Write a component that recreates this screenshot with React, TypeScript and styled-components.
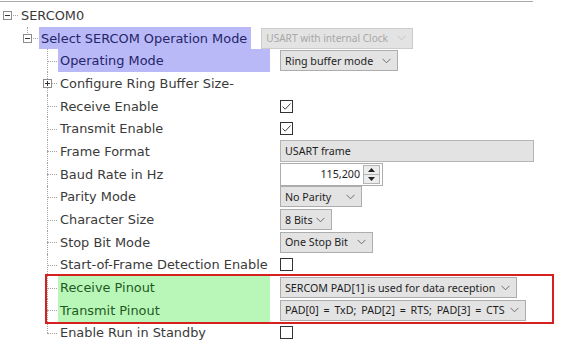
import React from "react";
import styled, { createGlobalStyle, css } from "styled-components";

const GlobalStyle = createGlobalStyle`
  html, body {
    margin: 0;
    padding: 0;
    background: #ffffff;
  }
  body {
    font-family: "DejaVu Sans", Verdana, sans-serif;
    color: #333333;
  }
`;

const ROW_H = 22.7;
const LINE = "#a3a3a3";

const Page = styled.div`
  width: 564px;
  height: 345px;
  overflow: hidden;
  padding-top: 1px;
  box-sizing: border-box;
`;

const TopRule = styled.div`
  width: 533px;
  height: 1px;
  background: #a9a9a9;
  margin-bottom: 2px;
`;

const Row = styled.div`
  display: flex;
  align-items: center;
  height: ${ROW_H}px;
`;

// tree gutter: connector lines + optional expander box
const Gutter = styled.div<{ $w: number; $x: number; $vline: "none" | "top" | "half" | "full" }>`
  position: relative;
  flex: none;
  align-self: stretch;
  width: ${(p) => p.$w}px;

  &::before {
    content: "";
    position: absolute;
    left: ${(p) => p.$x}px;
    top: 0;
    border-left: 1px dotted ${LINE};
    ${(p) =>
      p.$vline === "none"
        ? css`display: none;`
        : p.$vline === "full"
        ? css`bottom: 0;`
        : p.$vline === "half"
        ? css`bottom: 50%;`
        : css`height: 6px;`}
  }

  &::after {
    content: "";
    position: absolute;
    left: ${(p) => p.$x}px;
    right: 1px;
    top: 50%;
    border-top: 1px dotted ${LINE};
  }
`;

const Expander = styled.span<{ $x: number; $open?: boolean }>`
  position: absolute;
  z-index: 1;
  left: ${(p) => p.$x - 4}px;
  top: 50%;
  width: 9px;
  height: 9px;
  margin-top: -4px;
  box-sizing: border-box;
  border: 1px solid #8c8c8c;
  background: #ffffff;

  &::before {
    content: "";
    position: absolute;
    left: 1px;
    right: 1px;
    top: 3px;
    height: 1px;
    background: #333;
  }

  ${(p) =>
    p.$open
      ? ""
      : css`
          &::after {
            content: "";
            position: absolute;
            top: 1px;
            bottom: 1px;
            left: 3px;
            width: 1px;
            background: #333;
          }
        `}
`;

const tones = {
  plain: css`
    background: transparent;
    color: #3a3a3a;
  `,
  blue: css`
    background: #b9b9f7;
    color: #25256a;
  `,
  green: css`
    background: #b9f7b9;
    color: #1e5a1e;
  `,
};

const Label = styled.span<{ $tone: keyof typeof tones; $w?: number }>`
  display: flex;
  align-items: center;
  align-self: stretch;
  box-sizing: border-box;
  padding: 0 4px 0 2px;
  font-size: 12.9px;
  white-space: nowrap;
  ${(p) => (p.$w ? `width: ${p.$w}px;` : "")}
  ${(p) => tones[p.$tone]}
`;

const Control = styled.div<{ $gap?: number }>`
  margin-left: ${(p) => p.$gap ?? 10}px;
  display: flex;
  align-items: center;
`;

const Children = styled.div`
  margin-left: 42px;
`;

// red annotation frame drawn over the two pinout rows
const Callout = styled.div`
  position: relative;

  &::after {
    content: "";
    position: absolute;
    top: -2px;
    bottom: -2px;
    left: 3px;
    width: 509px;
    box-sizing: border-box;
    border: 2px solid #d61f1f;
    pointer-events: none;
    z-index: 2;
  }
`;

const fieldFont = css`
  font-family: "Noto Sans", "Open Sans", sans-serif;
  font-size: 10.7px;
`;

const DropBox = styled.div<{ $w: number; $disabled?: boolean; $spread?: number }>`
  ${fieldFont}
  display: flex;
  align-items: center;
  justify-content: space-between;
  box-sizing: border-box;
  width: ${(p) => p.$w}px;
  height: 21px;
  padding: 0 6px 0 4px;
  border: 1px solid ${(p) => (p.$disabled ? "#cccccc" : "#adadad")};
  background: #e3e3e3;
  color: ${(p) => (p.$disabled ? "#a8a8a8" : "#1e1e1e")};
  white-space: nowrap;
  overflow: hidden;
  word-spacing: ${(p) => p.$spread ?? 0}px;
  ${(p) => p.$disabled && css`font-size: 10.1px;`}
`;

const Chevron = ({ faded }: { faded?: boolean }) => (
  <svg width="9" height="6" viewBox="0 0 9 6" style={{ flex: "none" }}>
    <polyline
      points="0.5,0.8 4.5,4.8 8.5,0.8"
      fill="none"
      stroke={faded ? "#c4c4c4" : "#6d6d6d"}
      strokeWidth="1"
    />
  </svg>
);

type DropdownProps = { value: string; width: number; disabled?: boolean; spread?: number };

const Dropdown = ({ value, width, disabled, spread }: DropdownProps) => (
  <DropBox $w={width} $disabled={disabled} $spread={spread}>
    <span>{value}</span>
    <Chevron faded={disabled} />
  </DropBox>
);

const TextField = styled.div<{ $w: number }>`
  ${fieldFont}
  display: flex;
  align-items: center;
  box-sizing: border-box;
  width: ${(p) => p.$w}px;
  height: 22px;
  padding-left: 4px;
  border: 1px solid #b5b5b5;
  background: #e3e3e3;
  color: #1e1e1e;
`;

const CheckBox = styled.span`
  display: flex;
  align-items: center;
  justify-content: center;
  box-sizing: border-box;
  width: 13px;
  height: 13px;
  border: 1px solid #333333;
  background: #ffffff;
`;

const Check = ({ on }: { on?: boolean }) => (
  <CheckBox>
    {on && (
      <svg width="11" height="11" viewBox="0 0 11 11">
        <polyline points="1.5,5.5 4.2,8.2 9.5,2.5" fill="none" stroke="#444" strokeWidth="1" />
      </svg>
    )}
  </CheckBox>
);

const Spin = styled.div`
  display: flex;
  box-sizing: border-box;
  width: 103px;
  height: 23px;
  border: 1px solid #acacac;
  background: #ffffff;
`;

const SpinValue = styled.span`
  ${fieldFont}
  flex: 1;
  display: flex;
  align-items: center;
  justify-content: flex-end;
  padding-right: 3px;
  color: #1e1e1e;
`;

const SpinButtons = styled.div`
  display: flex;
  flex-direction: column;
  width: 15px;
  margin: 1px 2px 1px 0;
  border: 1px solid #b4b4b4;
`;

const SpinButton = styled.span`
  flex: 1;
  display: flex;
  align-items: center;
  justify-content: center;
  background: #ececec;

  & + & {
    border-top: 1px solid #b4b4b4;
  }
`;

const Triangle = ({ down }: { down?: boolean }) => (
  <svg width="7" height="4" viewBox="0 0 7 4">
    <polygon points={down ? "0,0 7,0 3.5,4" : "0,4 7,4 3.5,0"} fill="#222" />
  </svg>
);

type ChildProps = {
  label: string;
  tone?: keyof typeof tones;
  last?: boolean;
  closed?: boolean;
  children?: React.ReactNode;
};

const ChildRow = ({ label, tone = "plain", last, closed, children }: ChildProps) => (
  <Row>
    <Gutter $w={16} $x={5} $vline={last ? "half" : "full"}>
      {closed && <Expander $x={5} />}
    </Gutter>
    <Label $tone={tone} $w={212}>
      {label}
    </Label>
    {children && <Control>{children}</Control>}
  </Row>
);

export default function App() {
  return (
    <Page>
      <GlobalStyle />
      <TopRule />

      <Row>
        <Gutter $w={19} $x={7} $vline="none">
          <Expander $x={7} $open />
        </Gutter>
        <Label $tone="plain">SERCOM0</Label>
      </Row>

      <Row>
        <Gutter $w={39} $x={27} $vline="top">
          <Expander $x={27} $open />
        </Gutter>
        <Label $tone="blue">Select SERCOM Operation Mode</Label>
        <Control $gap={10}>
          <Dropdown value="USART with internal Clock" width={152} disabled />
        </Control>
      </Row>

      <Children>
        <ChildRow label="Operating Mode" tone="blue">
          <Dropdown value="Ring buffer mode" width={118} />
        </ChildRow>
        <ChildRow label="Configure Ring Buffer Size-" closed />
        <ChildRow label="Receive Enable">
          <Check on />
        </ChildRow>
        <ChildRow label="Transmit Enable">
          <Check on />
        </ChildRow>
        <ChildRow label="Frame Format">
          <TextField $w={254}>USART frame</TextField>
        </ChildRow>
        <ChildRow label="Baud Rate in Hz">
          <Spin>
            <SpinValue>115,200</SpinValue>
            <SpinButtons>
              <SpinButton>
                <Triangle />
              </SpinButton>
              <SpinButton>
                <Triangle down />
              </SpinButton>
            </SpinButtons>
          </Spin>
        </ChildRow>
        <ChildRow label="Parity Mode">
          <Dropdown value="No Parity" width={82} />
        </ChildRow>
        <ChildRow label="Character Size">
          <Dropdown value="8 Bits" width={52} />
        </ChildRow>
        <ChildRow label="Stop Bit Mode">
          <Dropdown value="One Stop Bit" width={93} />
        </ChildRow>
        <ChildRow label="Start-of-Frame Detection Enable">
          <Check />
        </ChildRow>
        <Callout>
          <ChildRow label="Receive Pinout" tone="green">
            <Dropdown value="SERCOM PAD[1] is used for data reception" width={237} />
          </ChildRow>
          <ChildRow label="Transmit Pinout" tone="green">
            <Dropdown value="PAD[0] = TxD; PAD[2] = RTS; PAD[3] = CTS" width={246} spread={2} />
          </ChildRow>
        </Callout>
        <ChildRow label="Enable Run in Standby" last>
          <Check />
        </ChildRow>
      </Children>
    </Page>
  );
}
